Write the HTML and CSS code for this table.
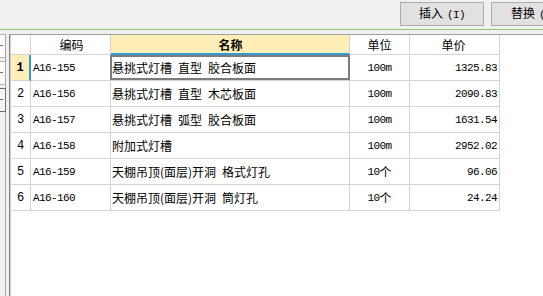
FILE: index.html
```html
<!DOCTYPE html>
<html>
<head>
<meta charset="utf-8">
<link rel="stylesheet" href="styles.css">
</head>
<body>
<div class="top">
  <button class="btn">插入<span class="num">(I)</span></button>
  <button class="btn btn-cut">替换<span class="num">(</span></button>
</div>
<div class="green"></div>
<div class="gap"></div>
<div class="main">
  <div class="side">
    <div class="strip">
      <div class="sbox"><span class="dash"></span></div>
      <div class="sbox"><span class="dash"></span></div>
      <div class="sbox dark"><span class="dash"></span></div>
    </div>
  </div>
  <div class="frame">
    <div class="row head">
      <div class="c rh"></div>
      <div class="c code cen">编码</div>
      <div class="c name cen sel-col">名称</div>
      <div class="c unit cen">单位</div>
      <div class="c price cen">单价</div>
    </div>
    <div class="row">
      <div class="c rh cur">1</div>
      <div class="c code num">A16-155</div>
      <div class="c name sel">悬挑式灯槽 直型 胶合板面</div>
      <div class="c unit cen"><span class="num">100m</span></div>
      <div class="c price num">1325.83</div>
    </div>
    <div class="row">
      <div class="c rh">2</div>
      <div class="c code num">A16-156</div>
      <div class="c name">悬挑式灯槽 直型 木芯板面</div>
      <div class="c unit cen"><span class="num">100m</span></div>
      <div class="c price num">2090.83</div>
    </div>
    <div class="row">
      <div class="c rh">3</div>
      <div class="c code num">A16-157</div>
      <div class="c name">悬挑式灯槽 弧型 胶合板面</div>
      <div class="c unit cen"><span class="num">100m</span></div>
      <div class="c price num">1631.54</div>
    </div>
    <div class="row">
      <div class="c rh">4</div>
      <div class="c code num">A16-158</div>
      <div class="c name">附加式灯槽</div>
      <div class="c unit cen"><span class="num">100m</span></div>
      <div class="c price num">2952.02</div>
    </div>
    <div class="row">
      <div class="c rh">5</div>
      <div class="c code num">A16-159</div>
      <div class="c name">天棚吊顶(面层)开洞 格式灯孔</div>
      <div class="c unit cen"><span class="num">10</span>个</div>
      <div class="c price num">96.06</div>
    </div>
    <div class="row">
      <div class="c rh">6</div>
      <div class="c code num">A16-160</div>
      <div class="c name">天棚吊顶(面层)开洞 筒灯孔</div>
      <div class="c unit cen"><span class="num">10</span>个</div>
      <div class="c price num">24.24</div>
    </div>
  </div>
</div>
</body>
</html>
```

FILE: styles.css
```css
html, body {
  margin: 0;
  padding: 0;
  width: 543px;
  height: 296px;
  overflow: hidden;
  background: #ffffff;
  font-family: "Noto Sans CJK SC", "Liberation Sans", sans-serif;
  font-size: 12px;
  color: #000;
}
.top {
  height: 29px;
  background: #f0f0f0;
  display: flex;
  align-items: flex-start;
  padding-left: 400px;
  gap: 7px;
  overflow: hidden;
  box-sizing: border-box;
}
.btn {
  flex: 0 0 auto;
  margin-top: 2px;
  width: 84px;
  height: 24px;
  background: #e1e1e1;
  border: 1px solid #adadad;
  font-family: "Noto Sans CJK SC", sans-serif;
  font-size: 12px;
  color: #000;
  padding: 0;
  line-height: 20px;
}
.btn .num {
  margin-left: 4px;
}
.btn-cut {
  text-align: left;
  padding-left: 19px;
}
.green {
  height: 1px;
  background: #8dc873;
}
.gap {
  height: 4px;
  background: #f0f0f0;
}
.main {
  display: flex;
  height: 262px;
}
.side {
  width: 9px;
  background: #f0f0f0;
  flex: 0 0 auto;
}
.strip {
  width: 5px;
  height: 100%;
  border-right: 1px solid #a8a8a8;
  display: flex;
  flex-direction: column;
  gap: 3px;
}
.sbox {
  height: 22px;
  border-top: 1px solid #b4b4b4;
  border-bottom: 1px solid #b4b4b4;
  background: #fcfcfc;
  position: relative;
}
.sbox.dark {
  border-top: 1px solid #6e6e6e;
  border-bottom: 1px solid #6e6e6e;
  border-right: 1px solid #6e6e6e;
  margin-right: -1px;
  background: #f4f4f4;
}
.dash {
  position: absolute;
  left: 0;
  top: 10px;
  width: 3px;
  height: 1px;
  background: #707070;
}
.frame {
  flex: 1 1 auto;
  border-top: 1px solid #a0a0a0;
  border-left: 1px solid #858585;
  box-shadow: inset 1px 0 0 #cfcfcf;
  padding-left: 1px;
  background: #fff;
}
.row {
  display: flex;
  height: 26px;
}
.row.head {
  height: 20px;
}
.c {
  box-sizing: border-box;
  border-right: 1px solid #d4d4d4;
  border-bottom: 1px solid #d4d4d4;
  display: flex;
  align-items: center;
  white-space: pre;
  overflow: hidden;
}
.rh { width: 20px; justify-content: center; }
.code { width: 80px; padding-left: 2px; }
.name {
  width: 239px;
  padding-left: 1px;
  position: relative;
  overflow: visible;
  word-spacing: 3.3px;
}
.unit { width: 60px; }
.price { width: 90px; justify-content: flex-end; padding-right: 2px; }
.cen { justify-content: center; }
.num {
  font-family: "Liberation Mono", monospace;
  font-size: 11px;
  letter-spacing: -0.6px;
  word-spacing: 0;
}
.rh {
  font-family: "Liberation Mono", monospace;
  font-size: 12px;
}
.head .name { font-weight: bold; }
.sel-col {
  background: #ffeeb6;
  border-bottom: 2px solid #2e9ad6;
}
.cur {
  background: #ffeeb6;
  border-right: 2px solid #2e9ad6;
  font-weight: bold;
}
.sel::after {
  content: "";
  position: absolute;
  left: -1px;
  top: 0;
  right: -1px;
  bottom: 0;
  border: 2px solid #7c7c7c;
}
```
